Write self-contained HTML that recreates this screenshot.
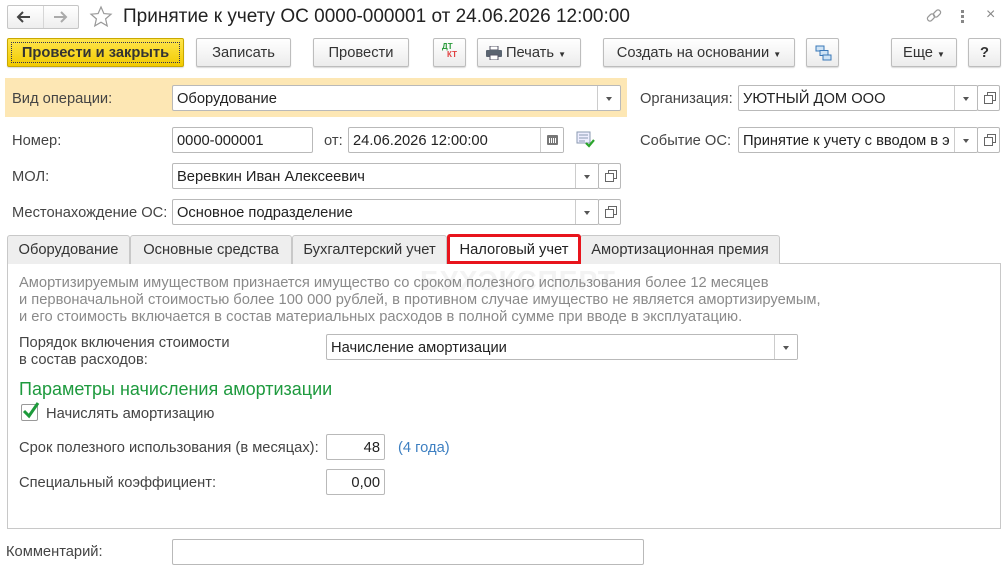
<!DOCTYPE html>
<html><head><meta charset="utf-8"><style>
*{box-sizing:border-box;margin:0;padding:0}
body{width:1007px;height:569px;background:#fff;font-family:"Liberation Sans",Arial,sans-serif;font-size:14.7px;color:#333;position:relative;overflow:hidden}
.a{position:absolute}
.btn{position:absolute;border:1px solid #bdbdbd;border-radius:2px;background:linear-gradient(#fff,#ececec);box-shadow:0 1px 1px rgba(0,0,0,.15);text-align:center;line-height:28px;color:#333;font-size:14.7px}
.fld{position:absolute;border:1px solid #b9b9b9;border-radius:2px;background:#fff;height:26px;line-height:26px;padding-left:4px;color:#222;font-size:14.7px;white-space:nowrap;overflow:hidden}
.dd{position:absolute;top:0;bottom:0;width:23px;border-left:1px solid #ccc;background:#fff}
.dd:after{content:"";position:absolute;left:8px;top:11px;border:3.5px solid transparent;border-top:4px solid #555}
.cp{position:absolute;height:26px;width:23px;border:1px solid #b9b9b9;border-radius:2px;background:#fff}
.cp:before{content:"";position:absolute;left:9px;top:6px;width:7px;height:7px;border:1px solid #666}
.cp:after{content:"";position:absolute;left:6px;top:9px;width:7px;height:7px;border:1px solid #666;background:#fff}
.lbl{position:absolute;color:#444;font-size:14.7px;white-space:nowrap;margin-top:1px}
.tab{position:absolute;top:235px;height:29px;border:1px solid #c8c8c8;border-bottom:none;background:#eee;line-height:29px;text-align:center;font-size:14.7px;color:#333;border-radius:3px 3px 0 0;white-space:nowrap}
</style></head><body>
<div class="a" style="left:7px;top:5px;width:72px;height:24px;border:1px solid #c6c6c6;border-radius:2px;background:linear-gradient(#fff,#eee)"></div>
<div class="a" style="left:43px;top:6px;width:1px;height:22px;background:#d6d6d6"></div>
<svg class="a" style="left:16px;top:10px" width="16" height="14" viewBox="0 0 16 14"><path d="M14 7H3M7 2L2 7l5 5" fill="none" stroke="#444" stroke-width="2"/></svg>
<svg class="a" style="left:52px;top:10px" width="16" height="14" viewBox="0 0 16 14"><path d="M2 7h11M9 2l5 5-5 5" fill="none" stroke="#aaa" stroke-width="2"/></svg>
<svg class="a" style="left:89px;top:5px" width="24" height="24" viewBox="0 0 24 24"><path d="M12 2l2.9 6.6 7.1.6-5.4 4.7 1.6 7-6.2-3.7-6.2 3.7 1.6-7L2 9.2l7.1-.6z" fill="none" stroke="#999" stroke-width="1.2"/></svg>
<div class="a" style="left:123px;top:6px;font-size:19px;color:#222">Принятие к учету ОС 0000-000001 от 24.06.2026 12:00:00</div>
<svg class="a" style="left:925px;top:7px" width="18" height="18" viewBox="0 0 18 18"><g fill="none" stroke="#999" stroke-width="1.3"><rect x="2" y="8" width="8" height="5" rx="2.5" transform="rotate(-45 6 10.5)"/><rect x="8" y="4" width="8" height="5" rx="2.5" transform="rotate(-45 12 6.5)"/></g></svg>
<div class="a" style="left:961px;top:10px;width:3px;height:3px;background:#888;box-shadow:0 5px #888,0 10px #888"></div>
<div class="a" style="left:986px;top:6px;font-size:16px;color:#888">×</div>
<div class="btn" style="left:7px;top:38px;width:177px;height:29px;background:linear-gradient(#ffe64d,#f2cb00);border-color:#c9a800;font-weight:bold;color:#333"><div style="position:absolute;left:3px;top:3px;right:3px;bottom:3px;border:1px dotted #335"></div>Провести и закрыть</div>
<div class="btn" style="left:196px;top:38px;width:95px;height:29px">Записать</div>
<div class="btn" style="left:313px;top:38px;width:96px;height:29px">Провести</div>
<div class="btn" style="left:433px;top:38px;width:33px;height:29px"><span style="position:absolute;left:8px;top:-6px;font-size:8px;font-weight:bold;color:#2a9a3a">ДТ</span><span style="position:absolute;left:13px;top:2px;font-size:8px;font-weight:bold;color:#e04040">КТ</span></div>
<div class="btn" style="left:477px;top:38px;width:104px;height:29px;padding-left:14px">Печать <span style="font-size:8px">▼</span><svg style="position:absolute;left:8px;top:7px" width="16" height="14" viewBox="0 0 16 14"><rect x="4" y="0" width="8" height="4" fill="#fff" stroke="#556"/><rect x="0" y="4" width="16" height="7" rx="1" fill="#5a6470"/><rect x="4" y="9" width="8" height="5" fill="#fff" stroke="#556"/></svg></div>
<div class="btn" style="left:603px;top:38px;width:192px;height:29px">Создать на основании <span style="font-size:8px">▼</span></div>
<div class="btn" style="left:806px;top:38px;width:33px;height:29px"><svg style="position:absolute;left:8px;top:6px" width="17" height="16" viewBox="0 0 17 16"><g fill="#cfe3f5" stroke="#3a78b8"><rect x="1" y="1" width="8" height="5"/><rect x="5" y="5.5" width="8" height="5"/><rect x="8" y="10" width="8" height="5"/></g></svg></div>
<div class="btn" style="left:891px;top:38px;width:66px;height:29px">Еще <span style="font-size:8px">▼</span></div>
<div class="btn" style="left:968px;top:38px;width:33px;height:29px;font-weight:bold">?</div>
<div class="a" style="left:5px;top:78px;width:622px;height:39px;background:#fde7b4"></div>
<div class="lbl" style="left:12px;top:90px">Вид операции:</div>
<div class="fld" style="left:172px;top:85px;width:449px">Оборудование<div class="dd" style="right:0"></div></div>
<div class="lbl" style="left:640px;top:90px">Организация:</div>
<div class="fld" style="left:738px;top:85px;width:240px">УЮТНЫЙ ДОМ ООО<div class="dd" style="right:0"></div></div>
<div class="cp" style="left:977px;top:85px"></div>
<div class="lbl" style="left:12px;top:132px">Номер:</div>
<div class="fld" style="left:172px;top:127px;width:141px">0000-000001</div>
<div class="lbl" style="left:324px;top:132px">от:</div>
<div class="fld" style="left:348px;top:127px;width:216px">24.06.2026 12:00:00<div class="a" style="right:0;top:0;bottom:0;width:23px;border-left:1px solid #ccc;background:#fff"><div class="a" style="left:6px;top:7px;width:11px;height:10px;background:#777;border-radius:1px"></div><div class="a" style="left:8px;top:10px;width:7px;height:5px;background:repeating-linear-gradient(90deg,#fff 0 1px,#777 1px 2px)"></div></div></div>
<svg class="a" style="left:576px;top:131px" width="20" height="18" viewBox="0 0 20 18"><rect x="1" y="1" width="13" height="11" fill="#eef" stroke="#8a9ab0"/><path d="M3 4h9M3 7h9M3 10h6" stroke="#8a9ab0"/><path d="M10 12l3 3 5-6" fill="none" stroke="#2ca52c" stroke-width="2.2"/></svg>
<div class="lbl" style="left:640px;top:132px">Событие ОС:</div>
<div class="fld" style="left:738px;top:127px;width:240px">Принятие к учету с вводом в э<div class="dd" style="right:0"></div></div>
<div class="cp" style="left:977px;top:127px"></div>
<div class="lbl" style="left:12px;top:168px">МОЛ:</div>
<div class="fld" style="left:172px;top:163px;width:427px">Веревкин Иван Алексеевич<div class="dd" style="right:0"></div></div>
<div class="cp" style="left:598px;top:163px"></div>
<div class="lbl" style="left:12px;top:204px">Местонахождение ОС:</div>
<div class="fld" style="left:172px;top:199px;width:427px">Основное подразделение<div class="dd" style="right:0"></div></div>
<div class="cp" style="left:598px;top:199px"></div>
<div class="a" style="left:7px;top:263px;width:994px;height:266px;border:1px solid #c8c8c8"></div>
<div class="tab" style="left:7px;width:123px">Оборудование</div>
<div class="tab" style="left:130px;width:162px">Основные средства</div>
<div class="tab" style="left:292px;width:155px">Бухгалтерский учет</div>
<div class="tab" style="left:580px;width:200px">Амортизационная премия</div>
<div class="tab" style="left:447px;width:134px;top:234px;height:30px;background:#fff;border:3px solid #e8141c;line-height:27px;color:#222">Налоговый учет</div>
<div class="a" style="left:420px;top:265px;font-size:28px;font-weight:bold;color:#f3f3f3;letter-spacing:1px">БУХЭКСПЕРТ</div>
<div class="a" style="left:19px;top:275px;color:#8a8a8a;font-size:14.7px;line-height:17px;white-space:nowrap">Амортизируемым имуществом признается имущество со сроком полезного использования более 12 месяцев<br>и первоначальной стоимостью более 100 000 рублей, в противном случае имущество не является амортизируемым,<br>и его стоимость включается в состав материальных расходов в полной сумме при вводе в эксплуатацию.</div>
<div class="lbl" style="left:19px;top:334px;line-height:17px">Порядок включения стоимости<br>в состав расходов:</div>
<div class="fld" style="left:326px;top:334px;width:472px">Начисление амортизации<div class="dd" style="right:0"></div></div>
<div class="a" style="left:19px;top:379px;font-size:18px;color:#1e9a3e;white-space:nowrap">Параметры начисления амортизации</div>
<div class="a" style="left:21px;top:404px;width:17px;height:17px;border:1px solid #999;border-radius:2px;background:#fff"></div>
<svg class="a" style="left:21px;top:400px" width="20" height="20" viewBox="0 0 20 20"><path d="M3 11l5 5 9-13" fill="none" stroke="#1d9a3b" stroke-width="3"/></svg>
<div class="lbl" style="left:46px;top:405px">Начислять амортизацию</div>
<div class="lbl" style="left:19px;top:439px">Срок полезного использования (в месяцах):</div>
<div class="fld" style="left:326px;top:434px;width:59px;text-align:right;padding-right:4px">48</div>
<div class="a" style="left:398px;top:440px;color:#3d7fc1">(4 года)</div>
<div class="lbl" style="left:19px;top:474px">Специальный коэффициент:</div>
<div class="fld" style="left:326px;top:469px;width:59px;text-align:right;padding-right:4px">0,00</div>
<div class="lbl" style="left:6px;top:543px">Комментарий:</div>
<div class="fld" style="left:172px;top:539px;width:472px;height:26px"></div>
</body></html>
